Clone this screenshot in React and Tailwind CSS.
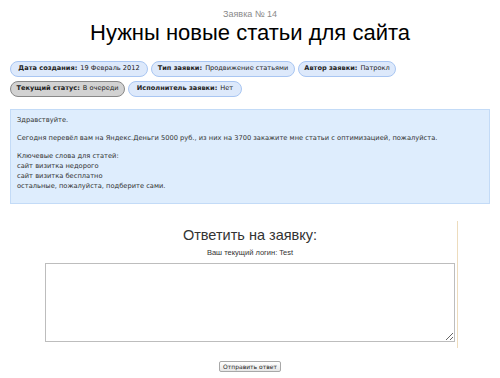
export default function App() {
  const pills1 = [
    ["Дата создания:", "19 Февраль 2012", "w-[138px]"],
    ["Тип заявки:", "Продвижение статьями", "w-[144px]"],
    ["Автор заявки:", "Патрокл", "w-[98px]"],
  ];

  return (
    <div className="w-[500px] h-[378px] overflow-hidden bg-white text-black font-['Liberation_Sans',Arial,sans-serif]">
      <div className="pt-[10px] text-center">
        <div className="text-[9px] leading-[9px] text-[#8a8a8a]">Заявка № 14</div>
        <h1 className="mt-[1px] text-[22px] leading-[26px]">Нужны новые статьи для сайта</h1>
      </div>

      <div className="mt-[15px] px-[10px] font-['DejaVu_Sans',Verdana,sans-serif] text-[6.6px] text-[#222]">
        <div className="flex gap-[3px]">
          {pills1.map(([label, value, w]) => (
            <div
              key={label}
              className={`${w} h-[16px] flex items-center justify-center rounded-full border border-[#a9c6f2] bg-[#dde9fb] whitespace-nowrap`}
            >
              <span className="font-bold">{label}</span>
              <span className="ml-[3px]">{value}</span>
            </div>
          ))}
        </div>
        <div className="flex gap-[3px] mt-[4px]">
          <div className="w-[115px] h-[16px] flex items-center justify-center rounded-full border border-[#888] bg-[#d2d2d2] whitespace-nowrap">
            <span className="font-bold">Текущий статус:</span>
            <span className="ml-[3px]">В очереди</span>
          </div>
          <div className="w-[114px] h-[16px] flex items-center justify-center rounded-full border border-[#a9c6f2] bg-[#dde9fb] whitespace-nowrap">
            <span className="font-bold">Исполнитель заявки:</span>
            <span className="ml-[3px]">Нет</span>
          </div>
        </div>
      </div>

      <div className="mx-[10px] mt-[12px] h-[95px] border border-[#c3dbf7] bg-[#deedfd] px-[6px] pt-[5px] font-['DejaVu_Sans',Verdana,sans-serif] text-[6.7px] leading-[10px] text-[#333]">
        <p>Здравствуйте.</p>
        <p className="mt-[8px]">
          Сегодня перевёл вам на Яндекс.Деньги 5000 руб., из них на 3700 закажите мне статьи с оптимизацией, пожалуйста.
        </p>
        <p className="mt-[8px]">
          Ключевые слова для статей:
          <br />
          сайт визитка недорого
          <br />
          сайт визитка бесплатно
          <br />
          остальные, пожалуйста, подберите сами.
        </p>
      </div>

      <div className="ml-[38px] mt-[17px] w-[420px] h-[127px] border-r border-[#eddcbd] pt-[5px]">
        <div className="text-center pl-[5px] text-[14.5px] leading-[18px] text-[#333]">Ответить на заявку:</div>
        <div className="text-center pl-[5px] mt-[4px] text-[7.5px] leading-[9px] text-[#333]">Ваш текущий логин: Test</div>
        <textarea className="block ml-[7px] mt-[6px] w-[410px] h-[79px] border border-[#bdbdbd] bg-white resize-y outline-none" />
      </div>

      <div className="flex justify-center mt-[13px]">
        <button className="h-[11px] w-[62px] flex items-center justify-center rounded-[2px] border border-[#a8a8a8] bg-gradient-to-b from-white to-[#e6e6e6] text-[6px] leading-[9px] text-[#222] font-['DejaVu_Sans',Verdana,sans-serif]">
          Отправить ответ
        </button>
      </div>
    </div>
  );
}
